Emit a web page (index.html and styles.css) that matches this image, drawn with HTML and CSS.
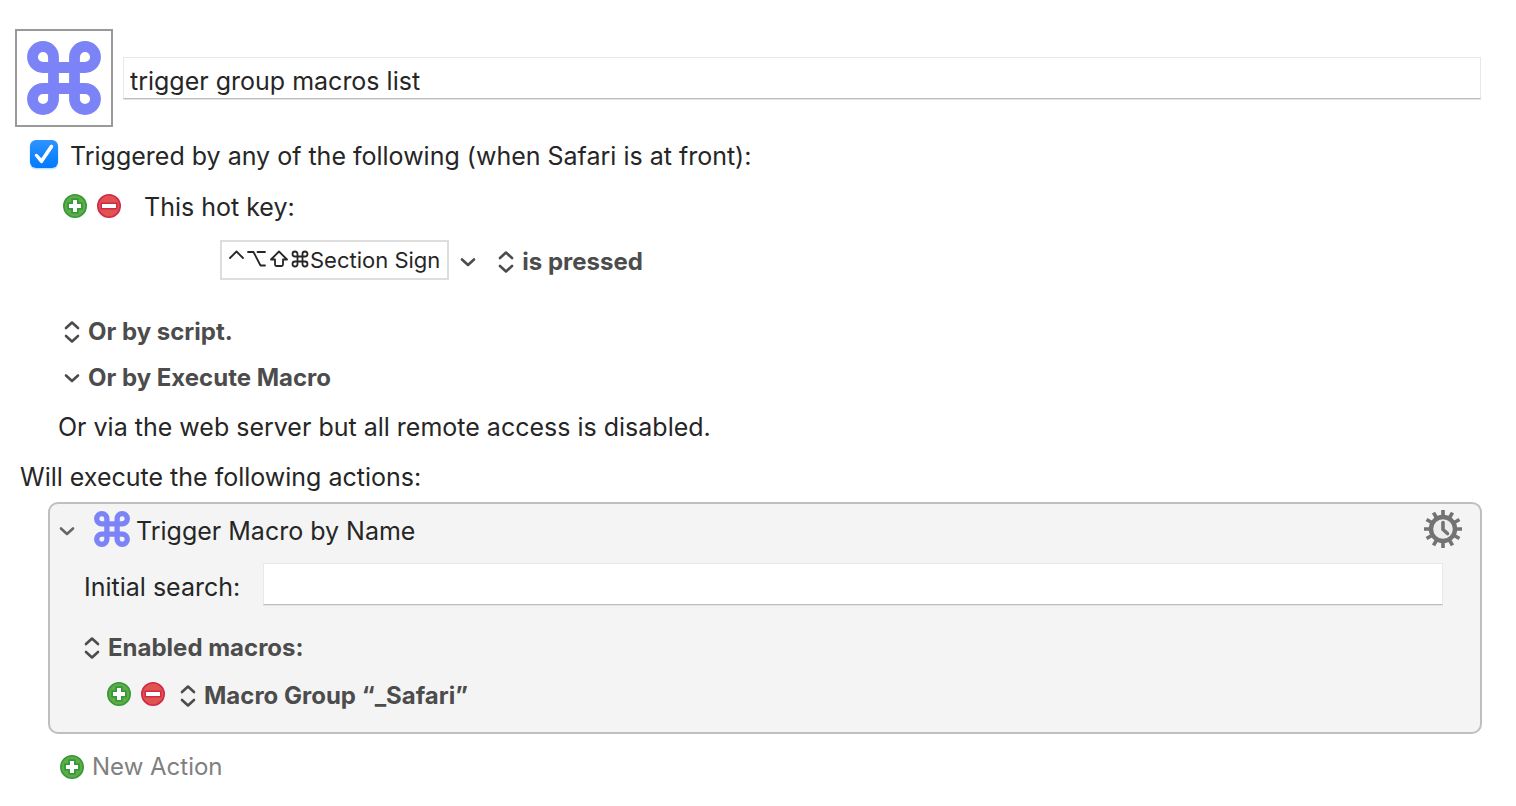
FILE: index.html
```html
<!DOCTYPE html>
<html lang="en">
<head>
<meta charset="utf-8">
<title>Macro editor</title>
<link rel="stylesheet" href="styles.css">
</head>
<body>
<svg class="defs" aria-hidden="true">
  <symbol id="command" viewBox="0 0 74 74"><path d="M26.5 16A10.5 10.5 0 1 0 16 26.5H58A10.5 10.5 0 1 0 47.5 16V58A10.5 10.5 0 1 0 58 47.5H16A10.5 10.5 0 1 0 26.5 58Z" fill="none" stroke="#7b83f7" stroke-width="10.8"/></symbol>
  <symbol id="plus" viewBox="0 0 24 24"><circle cx="12" cy="12" r="11.2" fill="#60ac45" stroke="#36993b" stroke-width="1.6"/><path d="M10 6h4v4h4v4h-4v4h-4v-4H6v-4h4z" fill="#fff" stroke="#36993b" stroke-width="3.6" paint-order="stroke"/></symbol>
  <symbol id="minus" viewBox="0 0 24 24"><circle cx="12" cy="12" r="11.2" fill="#e0534f" stroke="#d02a4b" stroke-width="1.6"/><path d="M5 10h14v4H5z" fill="#fff" stroke="#d02a4b" stroke-width="3" paint-order="stroke"/></symbol>
  <symbol id="updown" viewBox="0 0 16 24"><path d="M2 8L8 2.5L14 8M2 16L8 21.5L14 16" fill="none" stroke="#4c4c4c" stroke-width="2.6" stroke-linecap="round" stroke-linejoin="round"/></symbol>
  <symbol id="down" viewBox="0 0 16 24"><path d="M2 9.5L8 15L14 9.5" fill="none" stroke="currentColor" stroke-width="2.6" stroke-linecap="round" stroke-linejoin="round"/></symbol>
</svg>
<main class="editor">
  <header class="title-row">
    <button class="macro-icon" aria-label="Macro icon"><svg class="command-large"><use href="#command"/></svg></button>
    <input class="field name-field" type="text" aria-label="Macro name" value="trigger group macros list">
  </header>

  <section class="triggers">
    <label class="row check-row">
      <input class="check" type="checkbox" checked>
      <span>Triggered by any of the following (when Safari is at front):</span>
    </label>
    <div class="row trigger-row">
      <button class="round" aria-label="Add trigger"><svg><use href="#plus"/></svg></button>
      <button class="round" aria-label="Remove trigger"><svg><use href="#minus"/></svg></button>
      <span class="trigger-name">This hot key:</span>
    </div>
    <div class="hotkey-row">
      <button class="hotkey">
        <svg class="modifiers" viewBox="0 0 82 22" role="img" aria-label="Control Option Shift Command" fill="none" stroke="#262626" stroke-width="1.8" stroke-linecap="round" stroke-linejoin="round"><path d="M2 9L8.500 2.500L15 9M20 3H25.500L32.500 16.500H37M29.500 3H37M51 2.500L59 10.500H55V15.500Q55 17 53.500 17H48.500Q47 17 47 15.500V10.500H43ZM69.500 5A2.500 2.500 0 1 0 67 7.500V7.500H77A2.500 2.500 0 1 0 74.500 5V15A2.500 2.500 0 1 0 77 12.500H67A2.500 2.500 0 1 0 69.500 15Z"/></svg>
        <span>Section Sign</span>
      </button>
      <button class="menu" aria-label="Hot key options"><svg class="arrow"><use href="#down"/></svg></button>
      <label class="popup"><svg class="arrow"><use href="#updown"/></svg><select aria-label="Hot key event"><option>is pressed</option></select></label>
    </div>
    <label class="row popup script-row"><svg class="arrow"><use href="#updown"/></svg><select aria-label="Script trigger"><option>Or by script.</option></select></label>
    <label class="row popup execute-row"><svg class="arrow"><use href="#down"/></svg><select aria-label="Execute macro"><option>Or by Execute Macro</option></select></label>
    <p class="row server-row">Or via the web server but all remote access is disabled.</p>
  </section>

  <h2 class="row actions-title">Will execute the following actions:</h2>
  <section class="action">
    <div class="action-head">
      <button class="menu disclose" aria-label="Collapse action"><svg class="arrow"><use href="#down"/></svg></button>
      <svg class="command-small"><use href="#command"/></svg>
      <h3 class="action-name">Trigger Macro by Name</h3>
      <button class="gear" aria-label="Action options">
        <svg viewBox="0 0 38 38" fill="none" stroke="#737373"><circle cx="19" cy="19" r="12" fill="#ededed" stroke-width="4.400"/><g stroke-width="3.600"><path id="tooth" d="M19 0V6M19 32V38"/><use href="#tooth" transform="rotate(30 19 19)"/><use href="#tooth" transform="rotate(60 19 19)"/><use href="#tooth" transform="rotate(90 19 19)"/><use href="#tooth" transform="rotate(120 19 19)"/><use href="#tooth" transform="rotate(150 19 19)"/></g><path d="M19 12.500V19.500L23.500 23.500" stroke-width="3.600" stroke-linecap="round" stroke-linejoin="round"/></svg>
      </button>
    </div>
    <div class="search-row">
      <label for="search">Initial search:</label>
      <input class="field search-field" id="search" type="text">
    </div>
    <label class="row popup enabled-row"><svg class="arrow"><use href="#updown"/></svg><select aria-label="Macro filter"><option>Enabled macros:</option></select></label>
    <div class="row group-row">
      <button class="round" aria-label="Add group"><svg><use href="#plus"/></svg></button>
      <button class="round" aria-label="Remove group"><svg><use href="#minus"/></svg></button>
      <label class="popup group-popup"><svg class="arrow"><use href="#updown"/></svg><select aria-label="Macro group"><option>Macro Group “_Safari”</option></select></label>
    </div>
  </section>
  <button class="new-action"><svg><use href="#plus"/></svg><span>New Action</span></button>
</main>
</body>
</html>
```
FILE: styles.css
```css
* { box-sizing: border-box; }
body {
  margin: 0;
  background: #fff;
  color: #262626;
  font: 25px/32px Inter, "Liberation Sans", sans-serif;
}
.defs { position: absolute; width: 0; height: 0; }
svg { display: block; flex: none; }
button, input, select { margin: 0; font: inherit; color: inherit; }
button { border: 0; padding: 0; background: none; }
h2, h3, p { margin: 0; font: inherit; }
.editor { padding: 29px 34px 20px 15px; }
.title-row { display: flex; align-items: flex-end; gap: 10px; padding-right: 1px; }
.macro-icon {
  display: grid;
  place-items: center;
  flex: none;
  width: 98px;
  height: 98px;
  border: 2px solid #999;
  background: #fff;
}
.command-large { width: 74px; height: 74px; }
.field {
  flex: 1;
  min-width: 0;
  border: 1px solid #e8e8e8;
  border-bottom-color: #bdbdbd;
  border-radius: 0;
  background: #fff;
  box-shadow: 0 1px 0 #e4e4e4;
  outline: none;
}
.name-field { height: 42px; margin-bottom: 28px; padding: 6px 6px 0; }
.row { display: flex; align-items: center; min-height: 32px; }
.check-row { gap: 12px; margin: 13px 0 0 15px; }
.check {
  appearance: none;
  flex: none;
  width: 28px;
  height: 28px;
  margin-bottom: 4px;
  border-radius: 6px;
  background: linear-gradient(#2f93ff, #007aff);
  box-shadow: 0 1px 2px #007aff55;
  display: grid;
  place-items: center;
}
.check::before {
  content: "";
  width: 20px;
  height: 20px;
  background: #fff;
  clip-path: polygon(3% 58%, 7% 50%, 15% 49%, 37% 71%, 80% 6%, 88% 3%, 96% 9%, 95% 17%, 44% 93%, 37% 97%, 31% 93%);
}
.trigger-row { gap: 10px; margin: 19px 0 0 48px; }
.round, .round svg, .new-action svg { width: 24px; height: 24px; }
.round { margin-bottom: 2px; }
.trigger-name { margin-left: 13px; }
.hotkey-row { display: flex; align-items: center; margin: 17px 0 0 205px; }
.hotkey {
  display: flex;
  align-items: center;
  height: 40px;
  padding: 0 7px 0 6px;
  border: 2px solid #ddd;
  background: #fff;
  font-size: 22px;
}
.modifiers { width: 82px; height: 22px; }
.menu { color: #4c4c4c; }
.arrow { width: 16px; height: 24px; }
.hotkey-row .menu { margin: 3px 22px 0 11px; }
.popup { display: flex; align-items: center; gap: 8px; width: fit-content; color: #4c4c4c; font-size: 24px; font-weight: 700; }
.hotkey-row .popup { padding-top: 3px; }
.popup select { appearance: none; border: 0; padding: 0; background: none; height: 32px; }
.script-row { margin: 36px 0 0 49px; }
.execute-row { margin: 14px 0 0 49px; }
.server-row { margin: 17px 0 0 43px; }
.actions-title { margin: 18px 0 0 5px; }
.action {
  margin: 9px 0 0 33px;
  padding: 6px 18px 20px 9px;
  border: 2px solid #bfbfbf;
  border-radius: 10px;
  background: #f4f4f4;
}
.action-head { display: flex; align-items: center; height: 38px; }
.disclose { margin-right: 19px; padding-top: 3px; color: #666; }
.command-small { width: 36px; height: 36px; margin-right: 6px; }
.action-name { padding-top: 3px; }
.gear, .gear svg { width: 38px; height: 38px; }
.gear { margin-left: auto; }
.search-row { display: flex; align-items: center; gap: 23px; margin: 15px 19px 0 25px; }
.search-row label { padding-top: 5px; }
.search-field { height: 42px; padding: 6px 6px 0; }
.enabled-row { margin: 27px 0 0 25px; }
.group-row { gap: 10px; margin: 16px 0 0 48px; }
.group-row .round { margin-bottom: 4px; }
.group-popup { margin-left: 5px; }
.new-action { display: flex; align-items: center; gap: 8px; margin: 17px 0 0 45px; color: #808080; font-size: 24px; }
```
